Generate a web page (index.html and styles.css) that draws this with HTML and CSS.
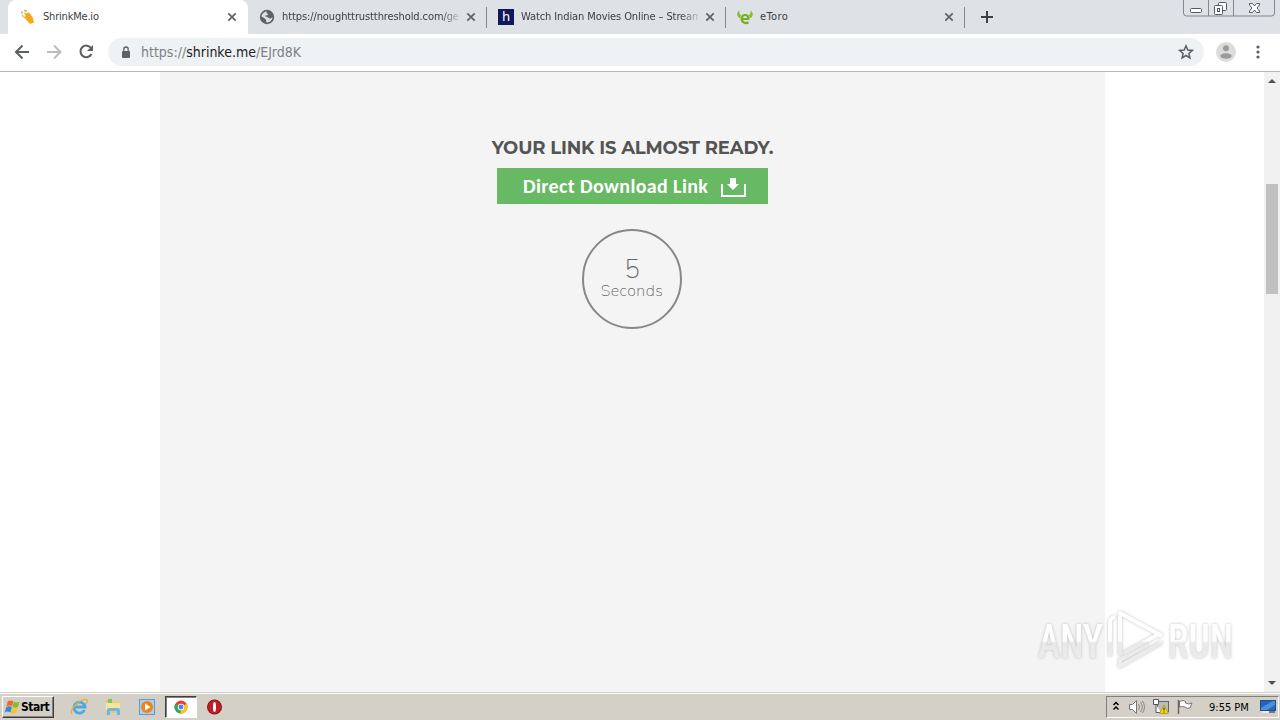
FILE: index.html
```
<!DOCTYPE html>
<html lang="en">
<head>
<meta charset="utf-8">
<title>ShrinkMe.io</title>
<link rel="stylesheet" href="styles.css">
</head>
<body>
<div class="tabs">
    <div class="tab active">
        <svg class="favicon" viewBox="0 0 16 16"><path d="M5 5l4-1.500 3.500 4.500 1.500 5.500-4 1.500-3.500-4-3-3 2-.5z" fill="#f5a81c"/><path d="M2 5V2M4 1.500l3 .5M4.500 4l3 3M2 6.500l2 1" stroke="#e5a84b" stroke-width="1.300" fill="none"/></svg>
        <span class="title t-shrink">ShrinkMe.io</span>
        <svg class="close" viewBox="0 0 10 10"><path d="M1.300 1.300l7.400 7.400M8.700 1.300L1.300 8.700"/></svg>
    </div>
    <div class="tab">
        <svg class="favicon" viewBox="0 0 16 16"><circle cx="8" cy="8" r="7.200" fill="#5f6368"/><path d="M8 2.400c-1 1.200-.5 2.400 1.400 2.400-.2 1.800-2 1.500-3.700 1.900.4 1.300 3.300.7 4 2.200.7 1.200 2.800.4 3.800-.9-.1 3-2.400 5.400-5.400 5.500-1.400-.3-.6-1.800-1.100-2.800C6.300 9.300 4 8.400 2.500 7.500 2.700 4.800 5.200 2.400 8 2.400z" fill="#dee1e6"/></svg>
        <span class="title fade t-nought">https://noughttrustthreshold.com/ge</span>
        <svg class="close" viewBox="0 0 10 10"><path d="M1.300 1.300l7.400 7.400M8.700 1.300L1.300 8.700"/></svg>
    </div>
    <div class="tab">
        <span class="favicon fav-h">h</span>
        <span class="title fade t-watch">Watch Indian Movies Online – Stream</span>
        <svg class="close" viewBox="0 0 10 10"><path d="M1.300 1.300l7.400 7.400M8.700 1.300L1.300 8.700"/></svg>
    </div>
    <div class="tab">
        <svg class="favicon" viewBox="0 0 16 16"><path d="M2.500 1.500C-.8 3.500-.5 7.500 3 9.500L4 6C2.500 5 2 4 2.500 1.500zM13.500 1.500c3.300 2 3 6-.5 8L12 6c1.500-1 2-2 1.500-4.500z" fill="#86bf2f"/><path d="M11.500 13.300c-3 1.700-6.800.2-6.800-3.300 0-2.500 1.500-4 3.500-4s3.500 1.500 3.200 4H5" fill="none" stroke="#73b022" stroke-width="2.200"/></svg>
        <span class="title t-etoro">eToro</span>
        <svg class="close" viewBox="0 0 10 10"><path d="M1.300 1.300l7.400 7.400M8.700 1.300L1.300 8.700"/></svg>
    </div>
    <svg class="plus" viewBox="0 0 12 12"><path d="M6 0v12M0 6h12" stroke="#3c4043" stroke-width="2"/></svg>
    <svg class="winbtns" viewBox="0 0 94 18">
        <path d="M1.500 0v13q0 3 3 3h85q3 0 3-3V0M26.500 0v16M51.500 0v16" fill="none" stroke="#83878e"/>
        <g fill="#fff" stroke="#555961"><rect x="8.500" y="8.500" width="11" height="4" rx="1"/><rect x="36.500" y="2.500" width="8" height="8" rx="1"/><rect x="32.500" y="5.500" width="8" height="9" rx="1"/><rect x="35.500" y="8.500" width="2" height="3"/>
        <path d="M67.500 3.500h3l2 2.500 2-2.500h3v1.500l-2.500 3 2.500 3v1.500h-3l-2-2.500-2 2.500h-3V11l2.500-3-2.500-3z"/></g>
    </svg>
</div>
<div class="toolbar">
    <svg class="nav" viewBox="0 0 96 20" fill="none" stroke-width="2">
        <path d="M22 10H9M15.500 3.500L9 10l6.500 6.500" stroke="#5b5f64"/>
        <path d="M40 10h13M47 3.500l6.500 6.500-6.500 6.500" stroke="#babcbe"/>
        <path d="M84 6A5.800 5.800 0 1 0 84.500 12" stroke="#5b5f64"/><path d="M86 3v6h-6z" fill="#5b5f64"/>
    </svg>
    <div class="omnibox">
        <svg class="lock" viewBox="0 0 10 13"><rect x="1" y="5" width="8" height="7" rx="1" fill="#5f6368"/><path d="M2.800 5V3.200a2.200 2.200 0 0 1 4.400 0V5" fill="none" stroke="#5f6368" stroke-width="1.300"/></svg>
        <span class="url">https://<b>shrinke.me</b>/EJrd8K</span>
        <svg class="star" viewBox="0 0 16 16"><path d="M8 1.800l1.800 4.200 4.500.4-3.400 3 1 4.500L8 11.500l-3.900 2.400 1-4.500-3.400-3 4.500-.4z" fill="none" stroke="#5b5f64" stroke-width="1.500"/></svg>
    </div>
    <svg class="avatar" viewBox="0 0 20 20"><circle cx="10" cy="10" r="10" fill="#dcdcdc"/><circle cx="10" cy="6.300" r="3" fill="#9b9b9b"/><ellipse cx="10" cy="14" rx="5.700" ry="2.800" fill="#9b9b9b"/></svg>
    <svg class="dots" viewBox="0 0 4 14" fill="#5b5f64"><circle cx="2" cy="2" r="1.600"/><circle cx="2" cy="7" r="1.600"/><circle cx="2" cy="12" r="1.600"/></svg>
</div>
<div class="page">
    <div class="content">
        <h1>YOUR LINK IS ALMOST READY.</h1>
        <div class="download">
            <span>Direct Download Link</span>
            <svg viewBox="0 0 26 20"><path d="M1 7v12h23V7" fill="none" stroke="#fff" stroke-width="2"/><path d="M9 1h6v6h3l-6 6-6-6h3z" fill="#fff"/></svg>
        </div>
        <div class="timer">
            <div class="count">5</div>
            <div class="seconds">Seconds</div>
        </div>
    </div>
    <div class="scrollbar">
        <svg viewBox="0 0 16 16"><path d="M4 11l4-4 4 4z" fill="#505050"/></svg>
        <div class="thumb"></div>
        <svg viewBox="0 0 16 16"><path d="M4 5l4 4 4-4z" fill="#505050"/></svg>
    </div>
    <svg class="watermark" viewBox="0 0 200 64">
        <defs>
            <linearGradient id="wm" gradientUnits="userSpaceOnUse" x1="0" y1="0" x2="0" y2="64"><stop offset="0" stop-color="#fff"/><stop offset=".5" stop-color="#fdfdfd"/><stop offset=".53" stop-color="#e9e9e9"/><stop offset="1" stop-color="#eee"/></linearGradient>
            <filter id="glow" x="-10%" y="-10%" width="120%" height="120%"><feDropShadow dx="0" dy="0" stdDeviation="1.500" flood-color="#999" flood-opacity=".65"/></filter>
        </defs>
        <g filter="url(#glow)">
            <text class="wm-text" x="2" y="49" textLength="65" lengthAdjust="spacingAndGlyphs">ANY</text>
            <text class="wm-text" x="132" y="49" textLength="65" lengthAdjust="spacingAndGlyphs">RUN</text>
            <g fill="none" stroke="url(#wm)" stroke-width="4" stroke-linejoin="round">
                <path d="M84 46V4L126 27"/><path d="M79 8q-5 1-5 5v34"/><path d="M88 44l37-20"/><path d="M126 33L84 57v-6l28-15"/>
            </g>
        </g>
    </svg>
</div>
<div class="taskbar">
    <div class="start">
        <svg viewBox="0 0 18 16"><path d="M4 2q3-2 6 0L8.500 7.500q-3-2-6 0z" fill="#ed6b22"/><path d="M10.500 2.300q3 2 6 0L15 7.800q-3 2-6 0z" fill="#84bc32"/><path d="M2.300 8.200q3-2 6 0l-1.500 5.500q-3-2-6 0z" fill="#3987d1"/><path d="M8.800 8.500q3 2 6 0l-1.500 5.500q-3 2-6 0z" fill="#f5c52c"/></svg>
        <span>Start</span>
    </div>
    <div class="quick">
        <div class="item"><svg viewBox="0 0 18 18"><path d="M14.500 12a5.500 5.500 0 1 1 .5-3H5" fill="none" stroke="#48a9e3" stroke-width="2.800"/><path d="M2 16C-2 12 12-1 17 2q1 1-1 4" fill="none" stroke="#e0b23c" stroke-width="1.400"/></svg></div>
        <div class="item"><svg viewBox="0 0 18 18"><path d="M2 2h6l1 2h7v11H2z" fill="#e8cb6c"/><path d="M4 1h4v4H4z" fill="#7fc463"/><path d="M2 5h14v7H2z" fill="#f7e59c"/><path d="M3 17v-5q0-2 2-2h9q2 0 2 2v5h-3v-4H6v4z" fill="#6bb7e4"/></svg></div>
        <div class="item"><svg viewBox="0 0 18 18"><rect x="1.500" y="1.500" width="15" height="15" fill="#a9d0f0" stroke="#5e9bd3"/><circle cx="9" cy="9" r="6" fill="#ef8418"/><path d="M7 5.500v7l5.500-3.500z" fill="#fff"/></svg></div>
        <div class="item pressed"><svg viewBox="0 0 18 18"><circle cx="9" cy="9" r="6.500" fill="#e64234"/><path d="M9 9L3.400 5.700A6.500 6.500 0 0 0 9 15.500z" fill="#37a853"/><path d="M9 9l5.600-3.300A6.500 6.500 0 0 1 8.500 15.500z" fill="#fbc31b"/><circle cx="9" cy="9" r="3.200" fill="#fff"/><circle cx="9" cy="9" r="2.400" fill="#4285f4"/></svg></div>
        <div class="item"><svg viewBox="0 0 18 18"><circle cx="8.500" cy="9" r="7.500" fill="#8f1117"/><circle cx="8.500" cy="9" r="6.500" fill="#bd1f28"/><ellipse cx="8.500" cy="9" rx="1.500" ry="5" fill="#fff"/></svg></div>
    </div>
    <div class="tray">
        <svg class="chevron" viewBox="0 0 8 12"><path d="M1.500 4L4 1.500 6.500 4M1.500 8.500L4 6l2.500 2.500" fill="none" stroke="#000" stroke-width="1.500"/></svg>
        <svg class="speaker" viewBox="0 0 18 16"><path d="M1.500 5.500h3l4-4v13l-4-4h-3z" fill="#fff" stroke="#777"/><path d="M10.500 5q2 3 0 6M12.500 3q3.500 5 0 10M14.500 2q4 6 0 12" fill="none" stroke="#8a8a8a"/></svg>
        <svg class="network" viewBox="0 0 18 16"><rect x="5.500" y="2.500" width="11" height="10" fill="#b9bdc1" stroke="#666"/><path d="M1.500.5h5v5h-5zM4 5.500v8h5" fill="#fff" stroke="#555"/><path d="M12 6l4.500 8.500h-9z" fill="#f6d720" stroke="#c19d13"/><path d="M12 8.500v3M12 12.500v1" stroke="#222"/></svg>
        <svg class="flag" viewBox="0 0 18 16"><path d="M3.500 2.500q4-2 6 0v1.500q3 2 6.500 0l-2 5q-3 1-5-1-2-1-5.500 0z" fill="#fff" stroke="#777"/><path d="M2.500 1v14" stroke="#666" stroke-width="1.500"/></svg>
        <span class="clock">9:55 PM</span>
        <svg class="desktop" viewBox="0 0 16 14"><rect x=".5" y=".5" width="15" height="10" fill="#2165bd" stroke="#244d86"/><path d="M1 8L13 1h2v4L7 10H1z" fill="#4b90da"/><path d="M2 12h7" stroke="#e6e9ee" stroke-width="2"/><path d="M9 12h6" stroke="#6c7a8b" stroke-width="2"/></svg>
    </div>
</div>
</body>
</html>
```
FILE: styles.css
```
* {
    box-sizing: border-box;
}

body {
    margin: 0;
    width: 1280px;
    height: 720px;
    overflow: hidden;
    display: flex;
    flex-direction: column;
    font-family: "DejaVu Sans Condensed", "DejaVu Sans", sans-serif;
    background: #fff;
}

svg {
    display: block;
    flex: none;
}

.tabs {
    height: 34px;
    flex: none;
    display: flex;
    padding-left: 8px;
    background: #dee1e6;
}

.tab {
    width: 239px;
    display: flex;
    align-items: center;
    padding: 0 10px 0 11px;
    border-right: 1px solid transparent;
    border-image: linear-gradient(transparent 8px, #85888d 8px, #85888d 27px, transparent 27px) 1;
    color: #3c4043;
    font-size: 11px;
}

.tab.active {
    width: 240px;
    padding: 0 11px 0 12px;
    background: #fff;
    border-image: none;
    border-right: 0;
    border-radius: 8px 8px 0 0;
}

.favicon {
    width: 16px;
    height: 16px;
    flex: none;
    margin-right: 7px;
}

.fav-h {
    background: #10195c;
    color: #fff;
    font: 13px/16px "DejaVu Sans", sans-serif;
    text-align: center;
}

.title {
    flex: 1;
    overflow: hidden;
    white-space: nowrap;
    line-height: 16px;
    margin-right: 7px;
}

.fade {
    -webkit-mask-image: linear-gradient(90deg, #000 90%, transparent 102%);
    mask-image: linear-gradient(90deg, #000 90%, transparent 102%);
}

.t-shrink {
    letter-spacing: -0.2px;
}

.t-nought {
    letter-spacing: -0.1px;
}

.t-watch {
    letter-spacing: -0.1px;
}

.t-etoro {
    letter-spacing: 0.4px;
}

.close {
    width: 10px;
    height: 10px;
    fill: none;
    stroke: #5f6368;
    stroke-width: 1.7;
}

.plus {
    width: 12px;
    height: 12px;
    margin: 11px 0 0 16px;
}

.winbtns {
    width: 94px;
    height: 18px;
    margin-left: auto;
    margin-right: 4px;
}

.toolbar {
    height: 38px;
    flex: none;
    display: flex;
    align-items: center;
    padding-bottom: 1px;
    border-bottom: 1px solid #b5b8b3;
}

.nav {
    width: 96px;
    height: 20px;
    margin-left: 7px;
    margin-right: 5px;
}

.omnibox {
    width: 1096px;
    height: 28px;
    display: flex;
    align-items: center;
    padding: 0 10px 0 13px;
    border-radius: 14px;
    background: #eff2f5;
}

.lock {
    width: 10px;
    height: 13px;
}

.url {
    flex: 1;
    margin-left: 10px;
    color: #7d8186;
    font-size: 14px;
}

.url b {
    color: #202124;
    font-weight: normal;
}

.star {
    width: 16px;
    height: 16px;
}

.avatar {
    width: 20px;
    height: 20px;
    margin-left: 12px;
}

.dots {
    width: 4px;
    height: 14px;
    margin-left: 20px;
}

.page {
    height: 620px;
    flex: none;
    display: flex;
    position: relative;
    padding-left: 160px;
}

.content {
    width: 945px;
    display: flex;
    flex-direction: column;
    align-items: center;
    padding-top: 64px;
    background: #f4f4f4;
}

h1 {
    margin: 0;
    color: #545454;
    font: bold 18px/24px Montserrat, Inter, sans-serif;
    letter-spacing: -0.15px;
    white-space: nowrap;
}

.download {
    width: 271px;
    height: 36px;
    margin-top: 8px;
    display: flex;
    align-items: center;
    padding-left: 26px;
    background: #68b964;
    color: #fff;
    font: bold 20px/36px Carlito, "Open Sans", sans-serif;
}

.download span {
    width: 198px;
    white-space: nowrap;
    letter-spacing: 0.38px;
}

.download svg {
    width: 26px;
    height: 20px;
    margin-top: 1px;
}

.timer {
    width: 100px;
    height: 100px;
    margin-top: 25px;
    margin-right: 1px;
    padding-top: 26px;
    border: 2px solid #888;
    border-radius: 50%;
    color: #666;
    text-align: center;
    font-family: Nunito, Lato, sans-serif;
    font-weight: 200;
}

.count {
    font-size: 26px;
    line-height: 26px;
}

.seconds {
    font-size: 16px;
    line-height: 16px;
    letter-spacing: 0.5px;
}

.scrollbar {
    width: 16px;
    margin-left: auto;
    display: flex;
    flex-direction: column;
    background: #f1f1f1;
}

.scrollbar svg {
    width: 16px;
    height: 16px;
}

.thumb {
    width: 12px;
    height: 110px;
    margin: 96px 2px auto;
    background: #c1c1c1;
}

.watermark {
    position: absolute;
    left: 1036px;
    top: 537px;
    width: 200px;
    height: 64px;
    overflow: visible;
}

.wm-text {
    fill: url(#wm);
    font: 500 49px "Roboto Condensed", Roboto, sans-serif;
}

.taskbar {
    height: 28px;
    flex: none;
    display: flex;
    align-items: center;
    padding: 2px 1px 1px 2px;
    background: #d4d0c8;
    border-top: 1px solid #d4d0c8;
    box-shadow: inset 0 1px #fff;
}

.start {
    width: 52px;
    height: 22px;
    display: flex;
    align-items: center;
    padding-left: 1px;
    border: 1px solid;
    border-color: #fff #404040 #404040 #fff;
    box-shadow: inset -1px -1px #808080;
    font: bold 12px "DejaVu Sans Condensed", "DejaVu Sans", sans-serif;
    letter-spacing: -0.5px;
}

.start svg {
    width: 17px;
    height: 16px;
}

.quick {
    display: flex;
    margin-left: 9px;
}

.item {
    width: 32px;
    height: 22px;
    margin-right: 2px;
    display: flex;
    align-items: center;
    justify-content: center;
}

.item svg {
    width: 18px;
    height: 18px;
}

.pressed {
    background: #fff;
    border: 1px solid;
    border-color: #404040 #fff #fff #404040;
    box-shadow: inset 1px 1px #808080;
}

.tray {
    width: 173px;
    height: 22px;
    margin-left: auto;
    display: flex;
    align-items: center;
    border: 1px solid;
    border-color: #808080 #fff #fff #808080;
}

.chevron {
    width: 8px;
    height: 12px;
    margin-left: 5px;
}

.speaker {
    width: 18px;
    height: 16px;
    margin-left: 8px;
}

.network {
    width: 18px;
    height: 16px;
    margin-left: 6px;
}

.flag {
    width: 18px;
    height: 16px;
    margin-left: 6px;
}

.clock {
    width: 51px;
    margin-left: 15px;
    font-size: 11px;
    letter-spacing: 0;
    white-space: nowrap;
}

.desktop {
    width: 16px;
    height: 14px;
}
```
